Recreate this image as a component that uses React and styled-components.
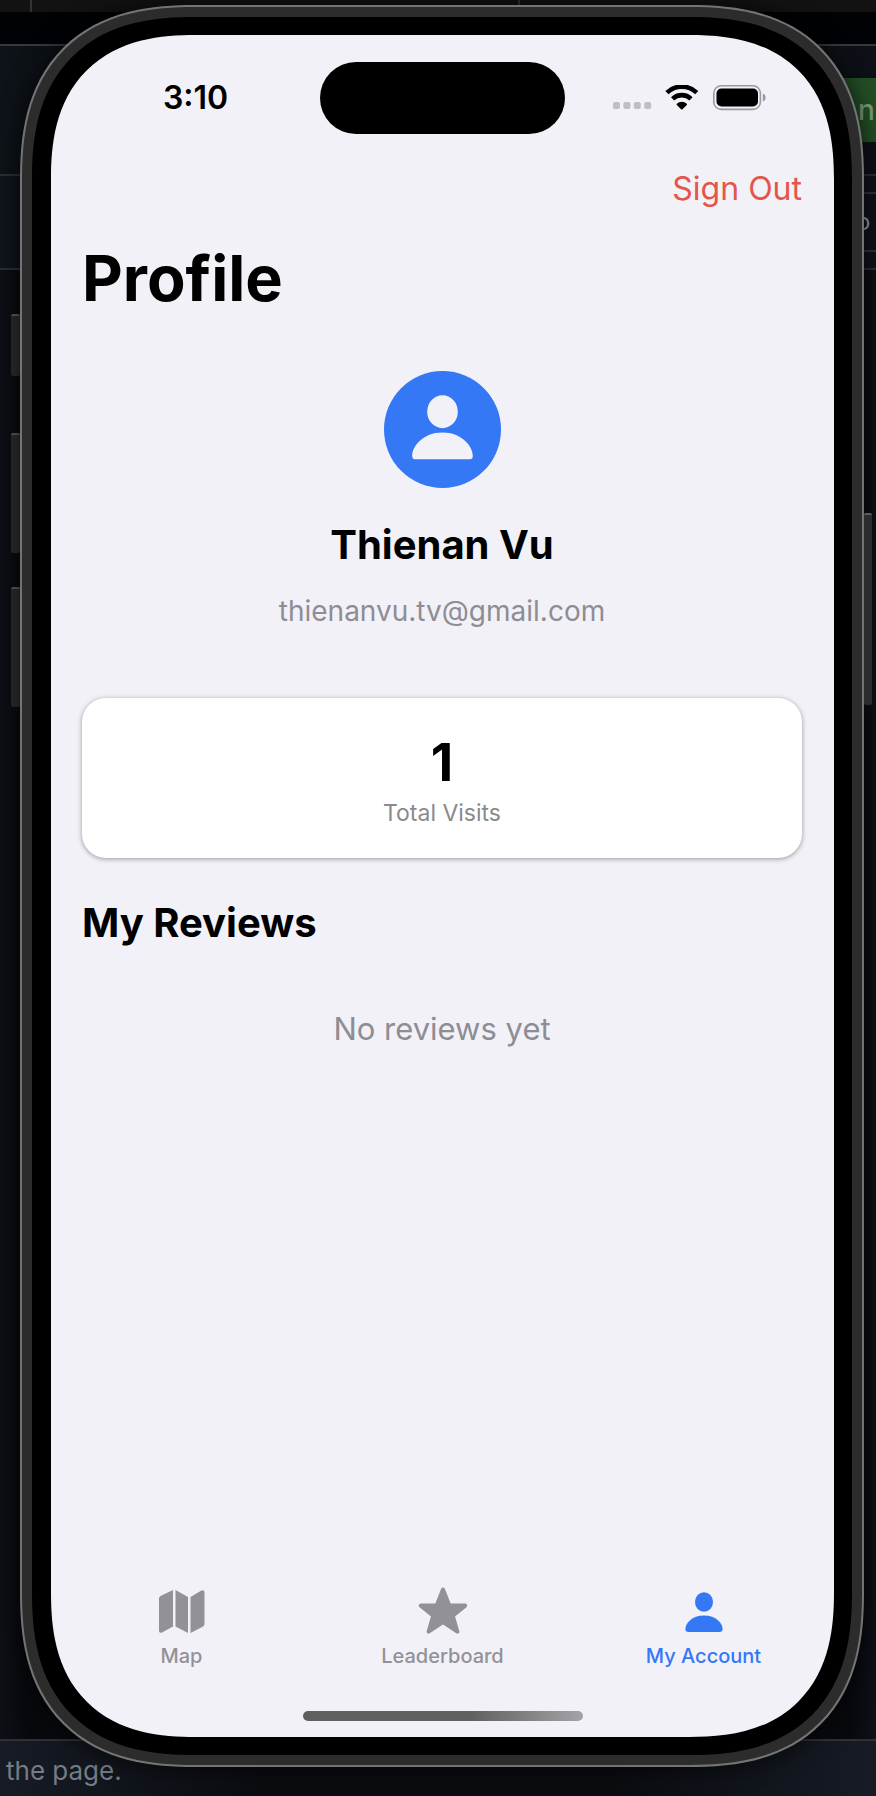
import React from "react";
import styled, { createGlobalStyle } from "styled-components";

const GlobalStyle = createGlobalStyle`
  * { box-sizing: border-box; }
  body {
    margin: 0;
    background: #0b0d12;
    font-family: Inter, "Liberation Sans", sans-serif;
  }
  h1, h2, p { margin: 0; }
`;

const Stage = styled.div`
  display: grid;
  min-height: 100vh;
  overflow: hidden;
`;

/* Browser page visible behind the device */
const Backdrop = styled.div`
  grid-area: 1 / 1;
  display: flex;
  flex-direction: column;
  min-width: 0;
`;

const BrowserStrip = styled.div`
  display: flex;
  height: 12px;
  background: #121212;
`;

const BrowserTab = styled.div`
  width: ${(p) => p.$width}px;
  border-right: 2px solid #333;
`;

const BackRow = styled.div`
  display: flex;
  flex-shrink: 0;
  justify-content: flex-end;
  height: ${(p) => p.$height}px;
  background: ${(p) => p.$bg};
  border-bottom: 2px solid ${(p) => p.$line || "#2b2e36"};
`;

const GreenAction = styled.div`
  width: 72px;
  height: 64px;
  margin-top: 32px;
  padding-left: 54px;
  background: #234f25;
  color: #7b9a7c;
  font-size: 28px;
  font-weight: 500;
  line-height: 64px;
`;

const OutlinedAction = styled.div`
  width: 48px;
  height: 60px;
  margin-top: 16px;
  padding-left: 26px;
  border: 2px solid #2f333c;
  border-right: 0;
  color: #9a9da3;
  font-size: 24px;
  line-height: 56px;
`;

const BackFill = styled.div`
  flex: 1;
  background: linear-gradient(90deg, #0d1016, #07090d 3%, #07090d 97%, #0d1016);
  border-bottom: 2px solid #2e3036;
`;

const BackFooter = styled.p`
  height: 55px;
  padding: 5px 6px 0;
  background: linear-gradient(90deg, #161b25, #0a0c10 30%, #0a0c10 70%, #161b25);
  font-size: 26px;
  line-height: 50px;
  color: #767b84;
`;

const Device = styled.div`
  grid-area: 1 / 1;
  z-index: 1;
  display: grid;
  grid-template-columns: 20px minmax(0, 1fr) 12px;
  padding: 5px 0 29px;
`;

const Rail = styled.div`
  display: flex;
  flex-direction: column;
  gap: 34px;
  padding: ${(p) => p.$pad};
`;

const SideKey = styled.div`
  height: ${(p) => p.$height}px;
  margin-bottom: ${(p) => p.$after || 0}px;
  background: #2c2c2c;
  border-top: 2px solid #5c5c5c;
  border-radius: 2px;
`;

/* Continuous-curvature corners where supported, plain arcs elsewhere */
const Shell = styled.div`
  display: flex;
  flex: 1;
  min-width: 0;
  border-radius: ${(p) => p.$arc}px;

  @supports (corner-shape: superellipse(1.3)) {
    border-radius: ${(p) => p.$curve}px;
    corner-shape: superellipse(1.3);
  }
`;

const Rim = styled(Shell)`
  padding: 2px;
  background: #747474;
  box-shadow: 0 0 24px rgba(0, 0, 0, 0.7);
`;

const Frame = styled(Shell)`
  padding: 10px;
  background: #2c2c2c;
`;

const Bezel = styled(Shell)`
  padding: 18px 18px 18px 19px;
  background: #000;
`;

const Screen = styled(Shell)`
  flex-direction: column;
  padding-bottom: 16px;
  background: #f2f1f8;
  overflow: hidden;
`;

const StatusBar = styled.div`
  display: grid;
  grid-template-columns: 1fr 245px 1fr;
  align-items: center;
  margin-top: 27px;
`;

const Island = styled.div`
  height: 72px;
  background: #000;
  border-radius: 36px;
`;

const Time = styled.time`
  padding-left: 20px;
  font-size: 32px;
  font-weight: 600;
  line-height: 40px;
  text-align: center;
`;

const StatusIcons = styled.div`
  display: flex;
  align-items: center;
  justify-content: center;
  padding-right: 20px;

  svg { display: block; }
`;

const Content = styled.main`
  display: flex;
  flex: 1;
  flex-direction: column;
  padding: 35px 32px 0 31px;
`;

const SignOut = styled.button`
  align-self: flex-end;
  padding: 0;
  border: 0;
  background: none;
  color: #e4554a;
  font: inherit;
  font-size: 32px;
  line-height: 40px;
  cursor: pointer;
`;

const Title = styled.h1`
  margin-top: 29px;
  font-size: 63px;
  font-weight: 700;
  line-height: 80px;
`;

const Person = styled.section`
  display: flex;
  flex-direction: column;
  align-items: center;
  margin-top: 53px;

  svg { display: block; }
`;

const Heading = styled.h2`
  margin-top: ${(p) => p.$top}px;
  font-size: 40px;
  font-weight: 700;
  line-height: 48px;
`;

const Email = styled.p`
  margin-top: 24px;
  color: #8e8d93;
  font-size: 28px;
  line-height: 36px;
`;

const StatCard = styled.section`
  margin-top: 69px;
  padding: 37px 0 31px;
  background: #fff;
  border-radius: 24px;
  box-shadow: 0 1px 5px rgba(0, 0, 0, 0.38);
  text-align: center;
`;

const StatValue = styled.p`
  font-size: 52px;
  font-weight: 700;
  line-height: 56px;
`;

const StatLabel = styled.p`
  margin-top: 8px;
  color: #8a8a8e;
  font-size: 23px;
  line-height: 28px;
`;

const Empty = styled.p`
  margin-top: 62px;
  color: #8e8d93;
  font-size: 31px;
  line-height: 40px;
  text-align: center;
`;

const TabBar = styled.nav`
  display: grid;
  grid-template-columns: repeat(3, 1fr);
`;

const Tab = styled.a`
  display: flex;
  flex-direction: column;
  align-items: center;
  gap: 8px;
  color: ${(p) => (p.$active ? "#3478f6" : "#929197")};
  font-size: 20px;
  font-weight: 500;
  line-height: 24px;
  text-decoration: none;

  svg { display: block; }
`;

const HomeIndicator = styled.div`
  width: 280px;
  height: 10px;
  margin: 43px auto 0;
  border-radius: 5px;
  background: linear-gradient(90deg, #5f5f61, #606062 60%, #a4a4a8);
`;

const StatusGlyphs = () => (
  <svg width="154" height="26" viewBox="0 0 154 26" role="img" aria-label="Wi-Fi connected, battery full">
    <g fill="#bfbec4">
      <rect x="0" y="17" width="7" height="7" rx="2" />
      <rect x="10.4" y="17" width="7" height="7" rx="2" />
      <rect x="20.8" y="17" width="7" height="7" rx="2" />
      <rect x="31.2" y="17" width="7" height="7" rx="2" />
    </g>
    <g fill="none" stroke="#000" strokeWidth="4.6">
      <path d="M53.9 7.600a21.500 21.500 0 0 1 29.800 0" />
      <path d="M59.6 13.800a13.300 13.300 0 0 1 18.400 0" />
    </g>
    <path d="M63.8 18.800a7.300 7.300 0 0 1 10 0q.5.6 0 1.2l-4.300 4.300q-.7.6-1.400 0l-4.300-4.300q-.5-.6 0-1.200z" />
    <rect x="100.8" y=".8" width="46.6" height="23.600" rx="7.500" fill="none" stroke="#9b9a9f" strokeWidth="1.600" />
    <rect x="103.5" y="3.500" width="41.500" height="18" rx="5" />
    <path d="M149.800 8.500q2.800 1 2.800 4t-2.800 4z" fill="#9b9a9f" />
  </svg>
);

const Avatar = () => (
  <svg width="117" height="117" viewBox="0 0 117 117" role="img" aria-label="Profile picture">
    <circle cx="58.5" cy="58.5" r="58.5" fill="#3478f6" />
    <ellipse cx="58.5" cy="40.7" rx="15.3" ry="16.5" fill="#f2f1f8" />
    <path
      d="M31 88.3q-2.8 0-2.8-3.6C28.2 75.5 39 61.5 58.5 61.5S88.8 75.5 88.8 84.7q0 3.6-2.8 3.6z"
      fill="#f2f1f8"
    />
  </svg>
);

const MapIcon = () => (
  <svg width="50" height="50" viewBox="1 1 50 50" fill="currentColor" aria-hidden="true">
    <path d="M3 13.500q0-1.700 1.500-2.600L17 4.900v36.600L6 47.500q-3 1-3-1.800z" />
    <path d="M19.500 4.900l12.500 7v36L19.500 41.500z" />
    <path d="M34.500 11.900l10.500-6.200q3.500-1.200 3.500 1.900v31.500q0 1.500-1.400 2.300L34.500 48z" />
  </svg>
);

const StarIcon = () => (
  <svg width="50" height="50" viewBox="0 0 50 50" fill="currentColor" aria-hidden="true">
    <path
      d="M25 3.500L31.300 19.600H47.200L34.800 29.800L39.400 45.700L25 36L10.600 45.700L15.200 29.800L2.800 19.600H18.700z"
      stroke="currentColor"
      strokeWidth="4"
      strokeLinejoin="round"
    />
  </svg>
);

const PersonIcon = () => (
  <svg width="50" height="50" viewBox="0 1 50 50" fill="currentColor" aria-hidden="true">
    <ellipse cx="25" cy="17" rx="9" ry="9.800" />
    <path d="M9.500 47q-3.100 0-3.100-3.300C6.400 38.500 13 30.500 25 30.500s18.600 8 18.600 13.200q0 3.300-3.100 3.300z" />
  </svg>
);

const tabs = [
  { label: "Map", Icon: MapIcon },
  { label: "Leaderboard", Icon: StarIcon },
  { label: "My Account", Icon: PersonIcon, active: true },
];

export default function App() {
  return (
    <>
      <GlobalStyle />
      <Stage>
        <Backdrop>
          <BrowserStrip>
            <BrowserTab $width={32} />
            <BrowserTab $width={488} />
          </BrowserStrip>
          <BackRow $height={34} $bg="#010205" $line="#343940" />
          <BackRow $height={130} $bg="linear-gradient(90deg, #0e1319, #0b0e12 10%, #0d1017)">
            <GreenAction>n</GreenAction>
          </BackRow>
          <BackRow $height={94} $bg="linear-gradient(90deg, #10141e, #0b0d11 10%, #0f121a)">
            <OutlinedAction>o</OutlinedAction>
          </BackRow>
          <BackFill />
          <BackFooter>the page.</BackFooter>
        </Backdrop>

        <Device>
          <Rail $pad="309px 0 0 11px">
            <SideKey $height={62} $after={23} />
            <SideKey $height={120} />
            <SideKey $height={120} />
          </Rail>
          <Rim $arc={152} $curve={175}>
            <Frame $arc={150} $curve={173}>
              <Bezel $arc={140} $curve={163}>
                <Screen $arc={122} $curve={145}>
                  <StatusBar>
                    <Time>3:10</Time>
                    <Island />
                    <StatusIcons>
                      <StatusGlyphs />
                    </StatusIcons>
                  </StatusBar>
                  <Content>
                    <SignOut type="button">Sign Out</SignOut>
                    <Title>Profile</Title>
                    <Person>
                      <Avatar />
                      <Heading $top={33}>Thienan Vu</Heading>
                      <Email>thienanvu.tv@gmail.com</Email>
                    </Person>
                    <StatCard>
                      <StatValue>1</StatValue>
                      <StatLabel>Total Visits</StatLabel>
                    </StatCard>
                    <Heading $top={41}>My Reviews</Heading>
                    <Empty>No reviews yet</Empty>
                  </Content>
                  <TabBar aria-label="Main">
                    {tabs.map(({ label, Icon, active }) => (
                      <Tab key={label} href="#" $active={active} aria-current={active ? "page" : undefined}>
                        <Icon />
                        {label}
                      </Tab>
                    ))}
                  </TabBar>
                  <HomeIndicator />
                </Screen>
              </Bezel>
            </Frame>
          </Rim>
          <Rail $pad="508px 4px 0 0">
            <SideKey $height={192} />
          </Rail>
        </Device>
      </Stage>
    </>
  );
}
